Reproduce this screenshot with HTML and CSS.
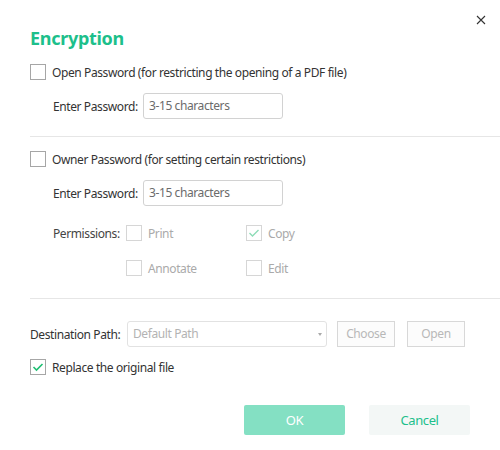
FILE: index.html
```html
<!DOCTYPE html>
<html>
<head>
<meta charset="utf-8">
<link rel="stylesheet" href="styles.css">
</head>
<body>
<div class="dialog">
  <button class="close" aria-label="Close">
    <svg width="10" height="10" viewBox="0 0 10 10"><path d="M1 1L9 9M9 1L1 9" stroke="#333" stroke-width="1.1" fill="none"/></svg>
  </button>
  <h1 class="title">Encryption</h1>

  <label class="check-row">
    <span class="box"></span>
    <span>Open Password (for restricting the opening of a PDF file)</span>
  </label>
  <div class="field-row">
    <span class="label">Enter Password:</span>
    <div class="input">3-15 characters</div>
  </div>

  <div class="sep"></div>

  <label class="check-row second">
    <span class="box"></span>
    <span>Owner Password (for setting certain restrictions)</span>
  </label>
  <div class="field-row">
    <span class="label">Enter Password:</span>
    <div class="input">3-15 characters</div>
  </div>

  <div class="perms">
    <span class="perm-label">Permissions:</span>
    <span class="perm"><span class="box disabled"></span>Print</span>
    <span class="perm"><span class="box disabled checked"><svg width="12" height="10" viewBox="0 0 12 10"><path d="M1.5 5L4.5 8L10.5 2" stroke="#8edcb7" stroke-width="1.4" fill="none"/></svg></span>Copy</span>
    <span></span>
    <span class="perm"><span class="box disabled"></span>Annotate</span>
    <span class="perm"><span class="box disabled"></span>Edit</span>
  </div>

  <div class="sep sep2"></div>

  <div class="dest-row">
    <span class="dest-label">Destination Path:</span>
    <div class="select">Default Path<span class="arrow"></span></div>
    <div class="btn-small choose">Choose</div>
    <div class="btn-small open">Open</div>
  </div>

  <label class="check-row replace">
    <span class="box active"><svg width="12" height="10" viewBox="0 0 12 10"><path d="M1.5 5L4.5 8L10.5 2" stroke="#1fbf73" stroke-width="1.6" fill="none"/></svg></span>
    <span>Replace the original file</span>
  </label>

  <div class="actions">
    <div class="btn ok">OK</div>
    <div class="btn cancel">Cancel</div>
  </div>
</div>
</body>
</html>
```

FILE: styles.css
```css
* { box-sizing: border-box; }
html, body {
  margin: 0;
  padding: 0;
  background: #fff;
}
body {
  font-family: "Noto Sans", "Open Sans", sans-serif;
  font-size: 12px;
  letter-spacing: -0.4px;
  color: #333;
  white-space: nowrap;
}
.dialog {
  position: relative;
  width: 500px;
  height: 450px;
  padding: 25px 0 0 30px;
}
.close {
  position: absolute;
  top: 15px;
  right: 14px;
  width: 10px;
  height: 10px;
  padding: 0;
  border: 0;
  background: none;
  display: flex;
}
.title {
  margin: 0;
  height: 26px;
  line-height: 26px;
  font-size: 18px;
  font-weight: bold;
  color: #1dbf8b;
  letter-spacing: -0.3px;
}
.check-row {
  display: flex;
  align-items: center;
  gap: 6px;
  height: 24px;
  margin-top: 9px;
}
.check-row.second { margin-top: 10px; }
.check-row.replace { margin-top: 8px; }
.box {
  width: 16px;
  height: 16px;
  border: 1px solid #a6a6a6;
  background: #fff;
  display: flex;
  align-items: center;
  justify-content: center;
  flex: none;
}
.box.disabled { border-color: #d6d6d6; }
.field-row {
  display: flex;
  align-items: center;
  height: 26px;
  margin-top: 9px;
  padding-left: 23px;
}
.label {
  width: 90px;
  flex: none;
}
.input {
  width: 140px;
  height: 26px;
  border: 1px solid #d2d2d2;
  border-radius: 3px;
  padding: 0 5px;
  line-height: 24px;
  color: #6b6b6b;
}
.sep {
  height: 1px;
  background: #e6e6e6;
  margin-top: 17px;
}
.sep.sep2 { margin-top: 18px; }
.perms {
  display: grid;
  grid-template-columns: 73px 120px 120px;
  grid-auto-rows: 24px;
  row-gap: 11px;
  margin-top: 15px;
  padding-left: 23px;
  align-items: center;
}
.perm-label { color: #444; }
.perm {
  display: flex;
  align-items: center;
  gap: 6px;
  color: #aaa;
}
.dest-row {
  display: flex;
  align-items: center;
  height: 26px;
  margin-top: 22px;
}
.dest-label { width: 97px; flex: none; }
.select {
  position: relative;
  width: 200px;
  height: 26px;
  border: 1px solid #e2e2e2;
  border-radius: 3px;
  padding: 0 5px;
  line-height: 24px;
  color: #b3b3b3;
}
.arrow {
  position: absolute;
  right: 4px;
  top: 11px;
  width: 0;
  height: 0;
  border-left: 2.5px solid transparent;
  border-right: 2.5px solid transparent;
  border-top: 3px solid #aaa;
}
.btn-small {
  width: 58px;
  height: 26px;
  border: 1px solid #d8d8d8;
  line-height: 24px;
  text-align: center;
  color: #b8b8b8;
  background: #fcfcfc;
}
.choose { margin-left: 10px; }
.open { margin-left: 12px; }
.actions {
  display: flex;
  gap: 24px;
  justify-content: flex-end;
  padding-right: 30px;
  margin-top: 26px;
}
.btn {
  width: 101px;
  height: 30px;
  border-radius: 2px;
  line-height: 30px;
  text-align: center;
  font-size: 13px;
}
.ok {
  background: #84e0c3;
  color: #fff;
}
.cancel {
  background: #f3f7f6;
  color: #1dbf8b;
}
```
